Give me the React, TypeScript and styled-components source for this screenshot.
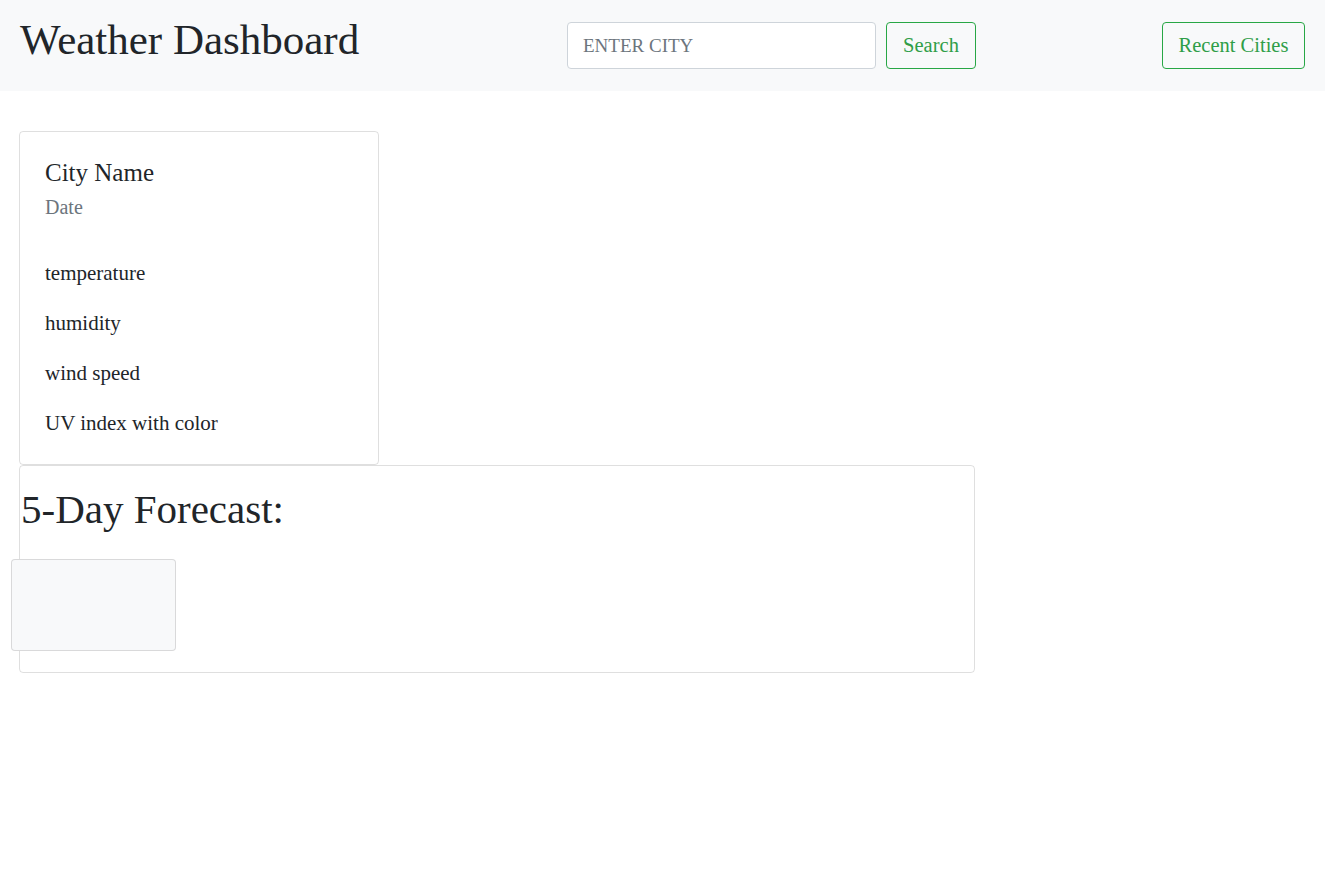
import React from "react";
import styled, { createGlobalStyle } from "styled-components";

const GlobalStyle = createGlobalStyle`
  html, body {
    margin: 0;
    padding: 0;
    background: #ffffff;
    font-family: "Liberation Serif", "Times New Roman", serif;
    color: #212529;
  }
  * { box-sizing: border-box; }
`;

const Nav = styled.header`
  display: flex;
  align-items: flex-start;
  height: 91px;
  padding: 15px 20px 0 20px;
  background: #f8f9fa;
`;

const Brand = styled.h1`
  flex: 0 0 547px;
  margin: 0;
  font-size: 43px;
  font-weight: 400;
  line-height: 50px;
  color: #212529;
  white-space: nowrap;
`;

const SearchForm = styled.form`
  display: flex;
  gap: 10px;
  margin-top: 7px;
`;

const CityInput = styled.input`
  width: 309px;
  height: 47px;
  padding: 0 15px;
  border: 1px solid #ced4da;
  border-radius: 4px;
  background: #ffffff;
  font-family: inherit;
  font-size: 19px;
  color: #495057;
  &::placeholder {
    color: #6c757d;
  }
`;

const OutlineButton = styled.button<{ $width: number }>`
  width: ${(p) => p.$width}px;
  height: 47px;
  padding: 0;
  border: 1px solid #28a745;
  border-radius: 4px;
  background: transparent;
  color: #2f9e48;
  font-family: inherit;
  font-size: 20.5px;
  cursor: pointer;
`;

const RecentWrap = styled.div`
  margin-left: auto;
  margin-top: 7px;
`;

const Main = styled.main`
  padding: 40px 0 0 19px;
`;

const TodayCard = styled.section`
  width: 360px;
  padding: 26px 25px 26px 25px;
  border: 1px solid rgba(0, 0, 0, 0.125);
  border-radius: 4px;
`;

const CityTitle = styled.h5`
  margin: 0;
  font-size: 25px;
  font-weight: 400;
  line-height: 30px;
`;

const DateLine = styled.h6`
  margin: 7px 0 0 0;
  font-size: 20px;
  font-weight: 400;
  line-height: 24px;
  color: #6c757d;
`;

const StatList = styled.div`
  display: flex;
  flex-direction: column;
  gap: 20px;
  margin-top: 39px;
`;

const Stat = styled.p`
  margin: 0;
  font-size: 21px;
  line-height: 30px;
`;

const ForecastBox = styled.section`
  width: 956px;
  height: 208px;
  padding: 19px 0 20px 0;
  border: 1px solid rgba(0, 0, 0, 0.125);
  border-radius: 4px;
`;

const ForecastTitle = styled.h2`
  margin: 0 0 26px 1px;
  font-size: 41px;
  font-weight: 400;
  line-height: 48px;
`;

const DayCard = styled.div`
  width: 165px;
  height: 92px;
  margin-left: -9px;
  background: #f8f9fa;
  border: 1px solid rgba(0, 0, 0, 0.125);
  border-radius: 4px;
`;

export default function App() {
  return (
    <>
      <GlobalStyle />
      <Nav>
        <Brand>Weather Dashboard</Brand>
        <SearchForm onSubmit={(e) => e.preventDefault()}>
          <CityInput type="text" placeholder="ENTER CITY" />
          <OutlineButton $width={90} type="submit">
            Search
          </OutlineButton>
        </SearchForm>
        <RecentWrap>
          <OutlineButton $width={143} type="button">
            Recent Cities
          </OutlineButton>
        </RecentWrap>
      </Nav>
      <Main>
        <TodayCard>
          <CityTitle>City Name</CityTitle>
          <DateLine>Date</DateLine>
          <StatList>
            <Stat>temperature</Stat>
            <Stat>humidity</Stat>
            <Stat>wind speed</Stat>
            <Stat>UV index with color</Stat>
          </StatList>
        </TodayCard>
        <ForecastBox>
          <ForecastTitle>5-Day Forecast:</ForecastTitle>
          <DayCard />
        </ForecastBox>
      </Main>
    </>
  );
}
